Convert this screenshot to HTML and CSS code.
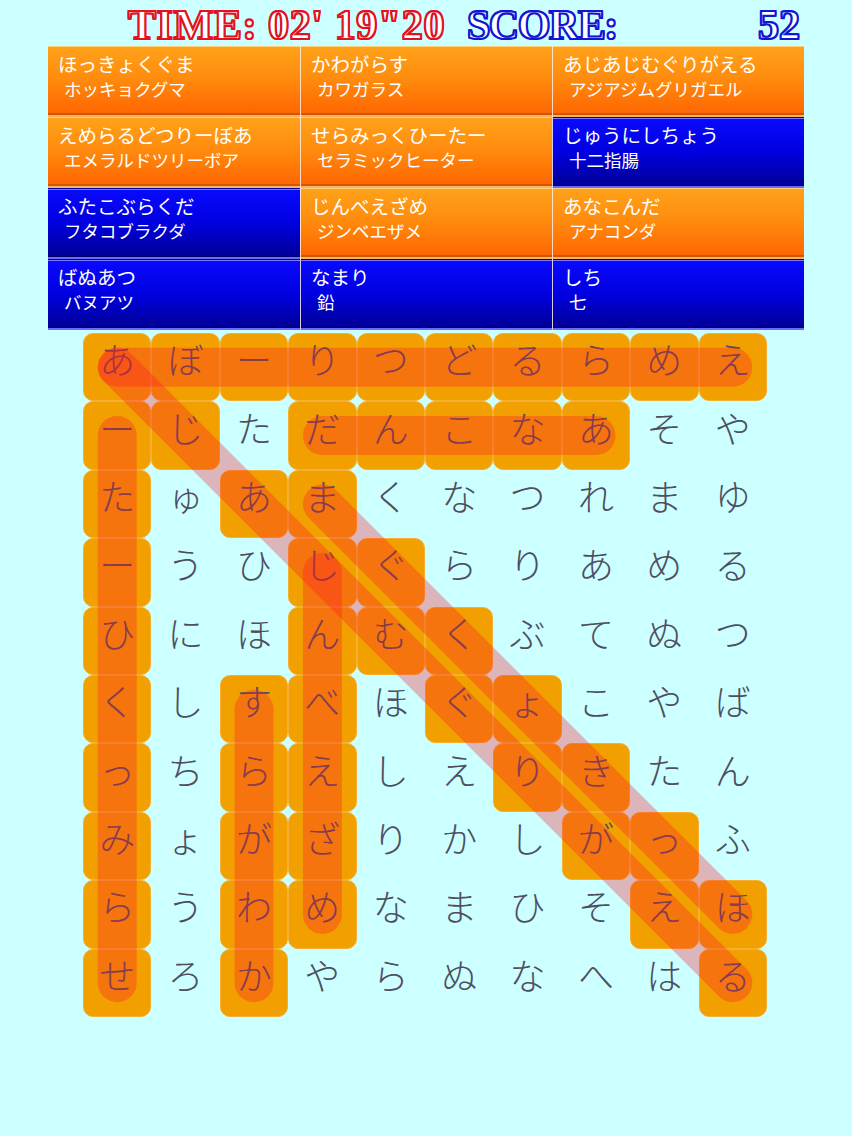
FILE: index.html
```html
<!DOCTYPE html>
<html lang="ja">
<head>
<meta charset="utf-8">
<title>Word Search</title>
<link rel="stylesheet" href="styles.css">
</head>
<body>
<header class="header">
  <span class="time">TIME: 02' 19"20</span>
  <span class="score-label">SCORE:</span>
  <span class="score-value">52</span>
</header>

<section class="words">
  <div class="word orange"><div class="kana">ほっきょくぐま</div><div class="answer">ホッキョクグマ</div></div>
  <div class="word orange"><div class="kana">かわがらす</div><div class="answer">カワガラス</div></div>
  <div class="word orange"><div class="kana">あじあじむぐりがえる</div><div class="answer">アジアジムグリガエル</div></div>
  <div class="word orange"><div class="kana">えめらるどつりーぼあ</div><div class="answer">エメラルドツリーボア</div></div>
  <div class="word orange"><div class="kana">せらみっくひーたー</div><div class="answer">セラミックヒーター</div></div>
  <div class="word blue"><div class="kana">じゅうにしちょう</div><div class="answer">十二指腸</div></div>
  <div class="word blue"><div class="kana">ふたこぶらくだ</div><div class="answer">フタコブラクダ</div></div>
  <div class="word orange"><div class="kana">じんべえざめ</div><div class="answer">ジンベエザメ</div></div>
  <div class="word orange"><div class="kana">あなこんだ</div><div class="answer">アナコンダ</div></div>
  <div class="word blue"><div class="kana">ばぬあつ</div><div class="answer">バヌアツ</div></div>
  <div class="word blue"><div class="kana">なまり</div><div class="answer">鉛</div></div>
  <div class="word blue"><div class="kana">しち</div><div class="answer">七</div></div>
</section>

<section class="board">
  <div class="c on">あ</div><div class="c on">ぼ</div><div class="c on">ー</div><div class="c on">り</div><div class="c on">つ</div><div class="c on">ど</div><div class="c on">る</div><div class="c on">ら</div><div class="c on">め</div><div class="c on">え</div>
  <div class="c on">ー</div><div class="c on">じ</div><div class="c">た</div><div class="c on">だ</div><div class="c on">ん</div><div class="c on">こ</div><div class="c on">な</div><div class="c on">あ</div><div class="c">そ</div><div class="c">や</div>
  <div class="c on">た</div><div class="c">ゅ</div><div class="c on">あ</div><div class="c on">ま</div><div class="c">く</div><div class="c">な</div><div class="c">つ</div><div class="c">れ</div><div class="c">ま</div><div class="c">ゆ</div>
  <div class="c on">ー</div><div class="c">う</div><div class="c">ひ</div><div class="c on">じ</div><div class="c on">ぐ</div><div class="c">ら</div><div class="c">り</div><div class="c">あ</div><div class="c">め</div><div class="c">る</div>
  <div class="c on">ひ</div><div class="c">に</div><div class="c">ほ</div><div class="c on">ん</div><div class="c on">む</div><div class="c on">く</div><div class="c">ぶ</div><div class="c">て</div><div class="c">ぬ</div><div class="c">つ</div>
  <div class="c on">く</div><div class="c">し</div><div class="c on">す</div><div class="c on">べ</div><div class="c">ほ</div><div class="c on">ぐ</div><div class="c on">ょ</div><div class="c">こ</div><div class="c">や</div><div class="c">ば</div>
  <div class="c on">っ</div><div class="c">ち</div><div class="c on">ら</div><div class="c on">え</div><div class="c">し</div><div class="c">え</div><div class="c on">り</div><div class="c on">き</div><div class="c">た</div><div class="c">ん</div>
  <div class="c on">み</div><div class="c">ょ</div><div class="c on">が</div><div class="c on">ざ</div><div class="c">り</div><div class="c">か</div><div class="c">し</div><div class="c on">が</div><div class="c on">っ</div><div class="c">ふ</div>
  <div class="c on">ら</div><div class="c">う</div><div class="c on">わ</div><div class="c on">め</div><div class="c">な</div><div class="c">ま</div><div class="c">ひ</div><div class="c">そ</div><div class="c on">え</div><div class="c on">ほ</div>
  <div class="c on">せ</div><div class="c">ろ</div><div class="c on">か</div><div class="c">や</div><div class="c">ら</div><div class="c">ぬ</div><div class="c">な</div><div class="c">へ</div><div class="c">は</div><div class="c on">る</div>

  <svg class="bands" viewBox="0 0 684 684" width="684" height="684" aria-hidden="true">
    <line x1="34.2" y1="34.2" x2="649.8" y2="34.2"/>
    <line x1="239.4" y1="102.6" x2="513" y2="102.6"/>
    <line x1="34.2" y1="102.6" x2="34.2" y2="649.8"/>
    <line x1="34.2" y1="34.2" x2="649.8" y2="649.8"/>
    <line x1="239.4" y1="171" x2="649.8" y2="581.4"/>
    <line x1="171" y1="376.2" x2="171" y2="649.8"/>
    <line x1="239.4" y1="239.4" x2="239.4" y2="581.4"/>
  </svg>
</section>
</body>
</html>
```

FILE: styles.css
```css
html, body {
  margin: 0;
  padding: 0;
}

body {
  width: 852px;
  height: 1136px;
  background: #ccffff;
  font-family: "Noto Sans CJK JP", "Noto Sans", sans-serif;
  overflow: hidden;
}

/* ---------- header ---------- */
.header {
  display: flex;
  align-items: flex-end;
  height: 46px;
  padding: 0 52px 0 128px;
  box-sizing: border-box;
  font-family: "Liberation Serif", "DejaVu Serif", serif;
  font-weight: bold;
  font-size: 42px;
  line-height: 42px;
}

.time {
  letter-spacing: 0.6px;
  color: #ffffff;
  -webkit-text-stroke: 1.8px #e3101e;
  text-shadow: 1px 1px 0 #e3101e, -1px -1px 0 #e3101e, 1px -1px 0 #e3101e, -1px 1px 0 #e3101e;
}

.score-label {
  margin-left: 22px;
  letter-spacing: -1.5px;
  color: #ffffff;
  -webkit-text-stroke: 1.8px #1414d2;
  text-shadow: 1px 1px 0 #1414d2, -1px -1px 0 #1414d2, 1px -1px 0 #1414d2, -1px 1px 0 #1414d2;
}

.score-value {
  margin-left: auto;
  color: #ffffff;
  -webkit-text-stroke: 1.8px #1414d2;
  text-shadow: 1px 1px 0 #1414d2, -1px -1px 0 #1414d2, 1px -1px 0 #1414d2, -1px 1px 0 #1414d2;
}

/* ---------- word list ---------- */
.words {
  display: grid;
  grid-template-columns: repeat(3, 252px);
  grid-auto-rows: 71px;
  width: 756px;
  margin-left: 48px;
}

.word {
  box-sizing: border-box;
  padding: 5px 0 0 10px;
  color: #ffffff;
  line-height: 25px;
}

.word:nth-child(3n+2),
.word:nth-child(3n) {
  border-left: 1px solid rgba(255, 240, 235, 0.85);
}

.word.orange {
  background: linear-gradient(to bottom, #ffa21a 0%, #ff8c0e 45%, #ff6200 100%);
  box-shadow:
    inset 0 1px 0 #ffd07a,
    inset 0 -2px 0 #ffb060,
    inset 0 -4px 0 #d05600;
}

.word.blue {
  background: linear-gradient(to bottom, #0a0aff 0%, #0000e0 50%, #000090 100%);
  box-shadow:
    inset 0 1px 0 #0000a0,
    inset 0 2px 0 #7a7aff,
    inset 0 -2px 0 #6a6aff,
    inset 0 -3px 0 #00006a;
}

.kana {
  font-size: 19.5px;
}

.answer {
  padding-left: 6px;
  font-size: 17.5px;
}

/* ---------- board ---------- */
.board {
  position: relative;
  display: grid;
  grid-template-columns: repeat(10, 68.4px);
  grid-template-rows: repeat(10, 68.4px);
  width: 684px;
  margin: 3px 0 0 83px;
}

.c {
  display: flex;
  align-items: center;
  justify-content: center;
  box-sizing: border-box;
  padding-bottom: 18px;
  font-size: 36px;
  font-weight: 300;
  line-height: 1;
  color: #4e4e60;
}

.c.on {
  background: #f2a000;
  border-radius: 10px;
  border: 1px solid #f5b034;
}

.bands {
  position: absolute;
  left: 0;
  top: 0;
  pointer-events: none;
}

.bands line {
  stroke: rgba(255, 25, 40, 0.32);
  stroke-width: 39;
  stroke-linecap: round;
}
```
